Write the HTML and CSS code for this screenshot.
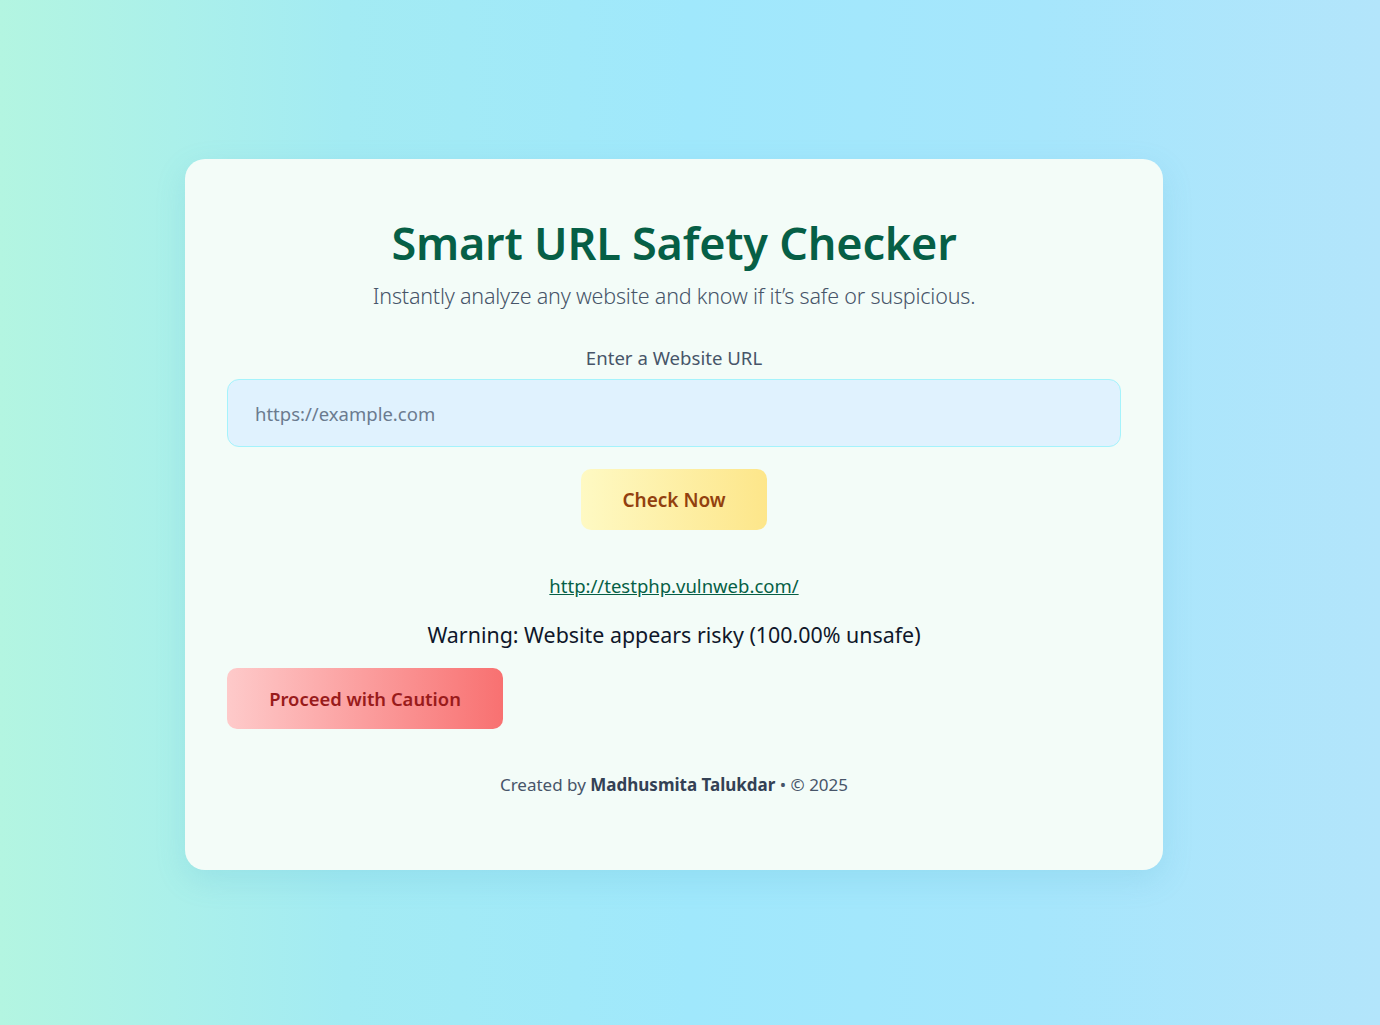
FILE: index.html
```html
<!DOCTYPE html>
<html lang="en">
<head>
<meta charset="utf-8">
<title>Smart URL Safety Checker</title>
<link rel="stylesheet" href="styles.css">
</head>
<body>
<main class="card">
  <h1 class="title">Smart URL Safety Checker</h1>
  <p class="subtitle">Instantly analyze any website and know if it’s safe or suspicious.</p>
  <form class="form">
    <label class="label" for="url">Enter a Website URL</label>
    <input class="input" id="url" type="text" placeholder="https://example.com">
    <button class="btn-check" type="button">Check Now</button>
  </form>
  <div class="result">
    <a class="result-link" href="#">http://testphp.vulnweb.com/</a>
    <p class="result-text">Warning: Website appears risky (100.00% unsafe)</p>
    <button class="btn-caution" type="button">Proceed with Caution</button>
  </div>
  <footer class="footer">Created by <strong>Madhusmita Talukdar</strong> • © 2025</footer>
</main>
</body>
</html>
```

FILE: styles.css
```css
* { box-sizing: border-box; }
html, body { margin: 0; height: 100%; }
body {
  font-family: "Noto Sans", "Open Sans", sans-serif;
  background: linear-gradient(90deg, #b3f5e1 0%, #a3ebf3 25%, #a0e8fc 50%, #a6e6fc 75%, #b3e5fb 100%);
  display: flex;
  align-items: center;
  justify-content: center;
  min-height: 100vh;
  padding: 4px 32px 0 0;
}
.card {
  width: 978px;
  height: 711px;
  flex-shrink: 0;
  background: #f3fcf8;
  border-radius: 20px;
  padding: 51px 42px 0;
  box-shadow: 0 10px 30px rgba(80, 170, 200, 0.18);
  display: flex;
  flex-direction: column;
  align-items: center;
}
.title {
  margin: 0;
  font-size: 45px;
  font-weight: 600;
  color: #065f46;
  line-height: 66px;
  letter-spacing: -0.2px;
}
.subtitle {
  margin: 6px 0 0;
  font-size: 21.5px;
  font-weight: 300;
  color: #475569;
  line-height: 28px;
  letter-spacing: -0.2px;
}
.form {
  width: 100%;
  display: flex;
  flex-direction: column;
  align-items: center;
  margin-top: 36px;
}
.label {
  font-size: 18.6px;
  color: #475569;
  line-height: 24px;
}
.input {
  margin-top: 9px;
  width: 100%;
  height: 68px;
  background: #e0f2fe;
  border: 1px solid #a5f3fc;
  border-radius: 12px;
  padding: 0 27px;
  font-family: inherit;
  font-size: 18.5px;
  color: #1e293b;
  outline: none;
}
.input::placeholder { color: #6b7b8f; }
.btn-check {
  margin-top: 22px;
  width: 186px;
  height: 61px;
  border: none;
  border-radius: 10px;
  background: linear-gradient(90deg, #fef9c3, #fde68a);
  color: #92400e;
  font-family: inherit;
  font-size: 19px;
  font-weight: 600;
  cursor: pointer;
}
.result {
  width: 100%;
  display: flex;
  flex-direction: column;
  align-items: center;
  margin-top: 43px;
}
.result-link {
  color: #065f46;
  font-size: 18.5px;
  line-height: 26px;
  text-decoration: underline;
}
.result-text {
  margin: 22px 0 0;
  font-size: 21.4px;
  line-height: 28px;
  color: #0f172a;
}
.btn-caution {
  align-self: flex-start;
  margin-top: 19px;
  width: 276px;
  height: 61px;
  border: none;
  border-radius: 10px;
  background: linear-gradient(90deg, #fecaca, #f87171);
  color: #991b1b;
  font-family: inherit;
  font-size: 18.4px;
  font-weight: 600;
  cursor: pointer;
}
.footer {
  margin-top: 44px;
  font-size: 17px;
  line-height: 24px;
  color: #475569;
}
.footer strong { color: #334155; font-weight: 700; }
```
